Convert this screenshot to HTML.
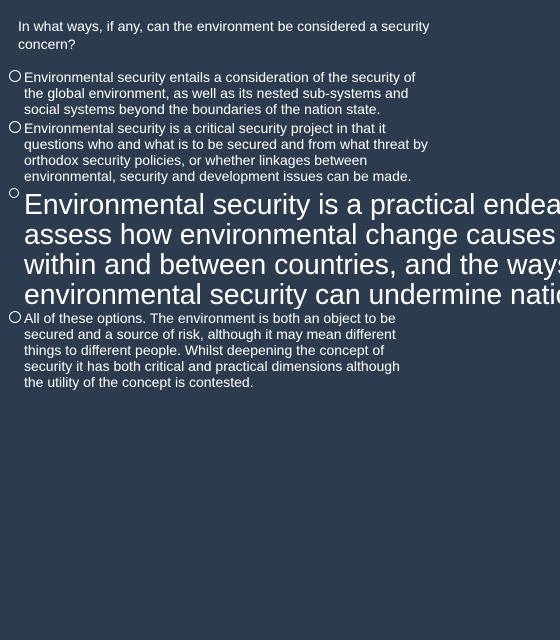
<!DOCTYPE html>
<html><head><style>
html,body{margin:0;padding:0;background:#2d3b4e;overflow:hidden;width:560px;height:640px}
body{font-family:"Liberation Sans",sans-serif;color:#fff;position:relative}
.q{position:absolute;left:18px;top:17px;font-size:14px;line-height:18px;width:430px}
.o{position:absolute;left:24px;font-size:14px;line-height:16px;white-space:nowrap}
.r{position:absolute;width:10px;height:10px;border:1px solid #fff;border-radius:50%;left:9px}
.big{font-size:28.3px;line-height:30px;width:536px;overflow:hidden}
</style></head><body>
<div class="q">In what ways, if any, can the environment be considered a security<br>concern?</div>
<div class="r" style="top:70px"></div>
<div class="o" style="top:69px">Environmental security entails a consideration of the security of<br>the global environment, as well as its nested sub-systems and<br>social systems beyond the boundaries of the nation state.</div>
<div class="r" style="top:121px"></div>
<div class="o" style="top:120px">Environmental security is a critical security project in that it<br>questions who and what is to be secured and from what threat by<br>orthodox security policies, or whether linkages between<br>environmental, security and development issues can be made.</div>
<div class="r" style="top:188px;width:8px;height:8px"></div>
<div class="o big" style="top:189px">Environmental security is a practical endeavour to<br>assess how environmental change causes violence<br>within and between countries, and the ways<br>environmental security can undermine national security.</div>
<div class="r" style="top:311px"></div>
<div class="o" style="top:310px">All of these options. The environment is both an object to be<br>secured and a source of risk, although it may mean different<br>things to different people. Whilst deepening the concept of<br>security it has both critical and practical dimensions although<br>the utility of the concept is contested.</div>
</body></html>
